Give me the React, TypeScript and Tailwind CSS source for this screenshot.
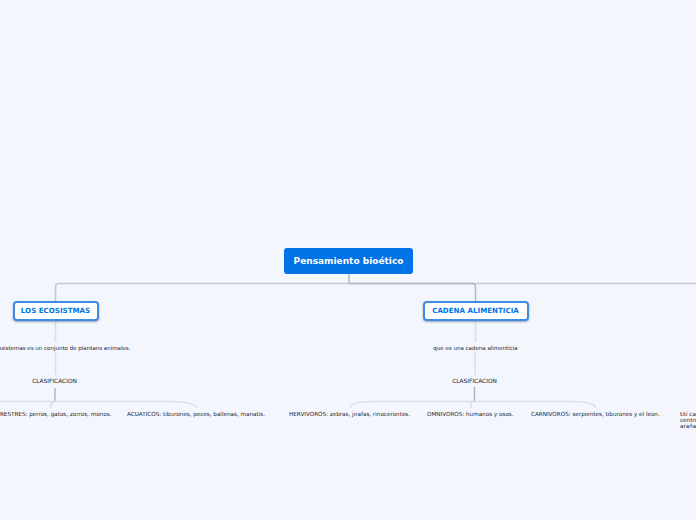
type LeafProps = { text: string; w: string };

function Caption({ text, size = "text-[5.65px]" }: { text: string; size?: string }) {
  return <div className={`whitespace-pre leading-[6px] text-[#24242c] ${size}`}>{text}</div>;
}

function Branch({ text, w }: { text: string; w: string }) {
  return (
    <div
      className={`flex h-[20px] shrink-0 items-center justify-center whitespace-nowrap rounded-[4px] border-2 border-[#3c8ee2] bg-white text-[7.1px] font-bold text-[#0073e6] shadow-[0_1px_2px_rgba(50,70,110,0.5)] ${w}`}
    >
      {text}
    </div>
  );
}

function BranchColumn({ title, w, intro, className }: { title: string; w: string; intro: string; className: string }) {
  return (
    <section className={`flex w-[111px] shrink-0 flex-col items-center ${className}`}>
      <Branch text={title} w={w} />
      <div className="mt-[24px]">
        <Caption text={intro} size="text-[5.5px]" />
      </div>
      <div className="mr-[2px] mt-[27px]">
        <Caption text="CLASIFICACION" size="text-[5.85px]" />
      </div>
    </section>
  );
}

const leaves: LeafProps[] = [
  { text: "TERRESTRES: perros, gatos, zorros, monos.", w: "w-[138px]" },
  { text: "ACUATICOS: tiburones, peces, ballenas, manatis.", w: "w-[162px]" },
  { text: "HERVIVOROS: zebras, jirafas, rinocerontes.", w: "w-[138px]" },
  { text: "OMNIVOROS: humanos y osos.", w: "w-[104px]" },
  { text: "CARNIVOROS: serpientes, tiburones y el leon.", w: "w-[149px]" },
  { text: "tití cabeciblanco\ncentroamericano\naraña", w: "w-[60px]" },
];

export default function App() {
  return (
    <div className="relative h-[520px] w-[696px] overflow-hidden bg-[#f4f6fe] pt-[248px] font-['DejaVu_Sans',sans-serif]">
      <svg className="absolute inset-0" width="696" height="520" fill="none">
        <path d="M349 274V283" stroke="#a9a9ad" strokeWidth="1.2" />
        <path d="M696 283.500H59Q55.500 283.500 55.500 287V301" stroke="#c6c7cc" strokeWidth="1.6" />
        <path d="M349 283.500H472Q475.500 283.500 475.500 287V301" stroke="#b4b5ba" strokeWidth="1.4" />
        <path d="M55.500 321V342M55.500 352V375" stroke="#dcdee6" strokeWidth="1.6" />
        <path d="M475.500 321V342M475 352V375" stroke="#dcdee6" strokeWidth="1.6" />
        <path d="M55 388V401" stroke="#b0b1b6" strokeWidth="1.4" />
        <path d="M474.500 387V401" stroke="#b0b1b6" strokeWidth="1.4" />
        <path d="M0 401.500H55Q50.500 402 50.500 408" stroke="#dcdee6" strokeWidth="1.5" />
        <path d="M55 401.500H170Q196 402 196.500 408" stroke="#dcdee6" strokeWidth="1.5" />
        <path d="M350 408Q350.500 401.500 375 401.500H570Q595 401.500 595.500 408" stroke="#dcdee6" strokeWidth="1.5" />
        <path d="M471 408V402" stroke="#dcdee6" strokeWidth="1.5" />
      </svg>

      <div className="relative flex flex-col">
        <div className="ml-[284px] flex h-[26px] w-[129px] items-center justify-center rounded-[3px] bg-[#0073e6] pt-[2px] text-[9px] font-bold text-white">
          Pensamiento bioético
        </div>

        <div className="mt-[27px] flex">
          <BranchColumn title="LOS ECOSISTMAS" w="w-[86px]" intro="Los ecosistemas es un conjunto de plantans animales." className="" />
          <BranchColumn title="CADENA ALIMENTICIA" w="w-[106px]" intro="que es una cadena alimenticia" className="ml-[309px]" />
        </div>

        <div className="ml-[-11px] mt-[27px] flex">
          {leaves.map((leaf) => (
            <div key={leaf.text} className={`shrink-0 ${leaf.w}`}>
              <Caption text={leaf.text} />
            </div>
          ))}
        </div>
      </div>
    </div>
  );
}
